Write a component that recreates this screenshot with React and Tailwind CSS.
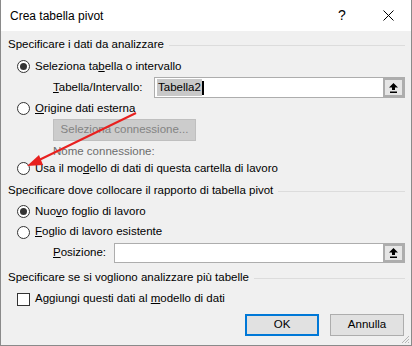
import React from 'react'

const font = { fontFamily: '"Liberation Sans", Arial, sans-serif' }

const Radio = ({ checked }) => (
  <span className="w-[13px] h-[13px] rounded-full border border-[#333333] bg-white flex items-center justify-center shrink-0">
    {checked && <span className="w-[7px] h-[7px] rounded-full bg-[#333333]" />}
  </span>
)

const Section = ({ title }) => (
  <div className="flex items-center h-[20px] pl-[7px] pr-[6px]">
    <span>{title}</span>
    <span className="flex-1 h-px bg-[#dcdcdc] ml-[5px]" />
  </div>
)

const RefButton = () => (
  <span className="w-[21px] h-full bg-[#adadad] p-[2px] shrink-0">
    <span className="w-full h-full bg-[#e6e6e6] flex items-center justify-center">
      <svg width="9" height="10" viewBox="0 0 9 10">
        <path d="M4.5 0 L9 4.5 L6 4.5 L6 7 L3 7 L3 4.5 L0 4.5 Z" fill="#000" />
        <rect x="1" y="8.5" width="7" height="1.5" fill="#000" />
      </svg>
    </span>
  </span>
)

const App = () => {
  return (
    <div className="relative w-[412px] h-[346px] bg-[#f0f0f0] border-x border-b border-[#8a8a8a] text-[11.5px] text-black overflow-hidden" style={font}>
      <div className="h-[31px] bg-white flex items-center pl-[9px]">
        <span className="flex-1 text-[12px]">Crea tabella pivot</span>
        <span className="w-[46px] text-center text-[14px]">?</span>
        <span className="w-[46px] flex justify-center items-center">
          <svg width="11" height="11" viewBox="0 0 11 11">
            <path d="M0.5 0.5 L10.5 10.5 M10.5 0.5 L0.5 10.5" stroke="#000" strokeWidth="1" />
          </svg>
        </span>
      </div>

      <div className="pt-[4px]">
        <Section title="Specificare i dati da analizzare" />
        <div className="flex items-center h-[21px] mt-[1px] pl-[16px] gap-[5px]">
          <Radio checked />
          <span>Seleziona ta<u>b</u>ella o intervallo</span>
        </div>
        <div className="flex items-center h-[21px] pl-[52px]">
          <span className="w-[101px]"><u>T</u>abella/Intervallo:</span>
          <div className="flex-1 mr-[6px] h-[21px] border border-[#adadad] bg-white flex items-center">
            <span className="ml-[2px] bg-[#c8c8c8] px-[1px]">Tabella2</span>
            <span className="w-[2px] h-[14px] bg-black" />
            <span className="flex-1" />
            <RefButton />
          </div>
        </div>
        <div className="flex items-center h-[21px] pl-[16px] gap-[5px]">
          <Radio />
          <span><u>O</u>rigine dati esterna</span>
        </div>
        <div className="flex items-center h-[22px] pl-[52px]">
          <span className="w-[143px] h-[22px] bg-[#cccccc] border border-[#bfbfbf] text-[#838383] flex items-center justify-center">
            Seleziona connessione...
          </span>
        </div>
        <div className="flex items-center h-[16px] mt-[3px] pl-[52px] text-[#6d6d6d]">Nome connessione:</div>
        <div className="flex items-center h-[17px] pl-[16px] gap-[5px]">
          <Radio />
          <span>Usa il mo<u>d</u>ello di dati di questa cartella di lavoro</span>
        </div>

        <div className="mt-[4px]">
          <Section title="Specificare dove collocare il rapporto di tabella pivot" />
        </div>
        <div className="flex items-center h-[21px] pl-[16px] gap-[5px]">
          <Radio checked />
          <span>Nuo<u>v</u>o foglio di lavoro</span>
        </div>
        <div className="flex items-center h-[20px] pl-[16px] gap-[5px]">
          <Radio />
          <span><u>F</u>oglio di lavoro esistente</span>
        </div>
        <div className="flex items-center h-[21px] pl-[52px]">
          <span className="w-[61px]"><u>P</u>osizione:</span>
          <div className="flex-1 mr-[6px] h-[20px] border border-[#adadad] bg-white flex items-center">
            <span className="flex-1" />
            <RefButton />
          </div>
        </div>

        <div className="mt-[5px]">
          <Section title="Specificare se si vogliono analizzare più tabelle" />
        </div>
        <div className="flex items-center h-[22px] pl-[16px] gap-[5px]">
          <span className="w-[13px] h-[13px] border border-[#333333] bg-white shrink-0" />
          <span>Aggiungi questi dati al <u>m</u>odello di dati</span>
        </div>

        <div className="flex justify-end gap-[11px] pr-[7px] mt-[4px]">
          <span className="w-[74px] h-[22px] bg-[#e1e1e1] border-2 border-[#0078d7] flex items-center justify-center">OK</span>
          <span className="w-[74px] h-[22px] bg-[#e1e1e1] border border-[#adadad] flex items-center justify-center">Annulla</span>
        </div>
      </div>

      <svg className="absolute right-[1px] bottom-[1px]" width="10" height="10" viewBox="0 0 10 10">
        <path d="M9 2 L2 9 M9 5 L5 9 M9 8 L8 9" stroke="#b5b5b5" strokeWidth="1" />
      </svg>

      <svg className="absolute left-0 top-0 pointer-events-none" width="412" height="346" viewBox="0 0 412 346">
        <line x1="135" y1="113" x2="36" y2="161" stroke="#e8201f" strokeWidth="2" />
        <path d="M26 166 L38 155 L42 165 Z" fill="#e8201f" />
      </svg>
    </div>
  )
}

export default App
